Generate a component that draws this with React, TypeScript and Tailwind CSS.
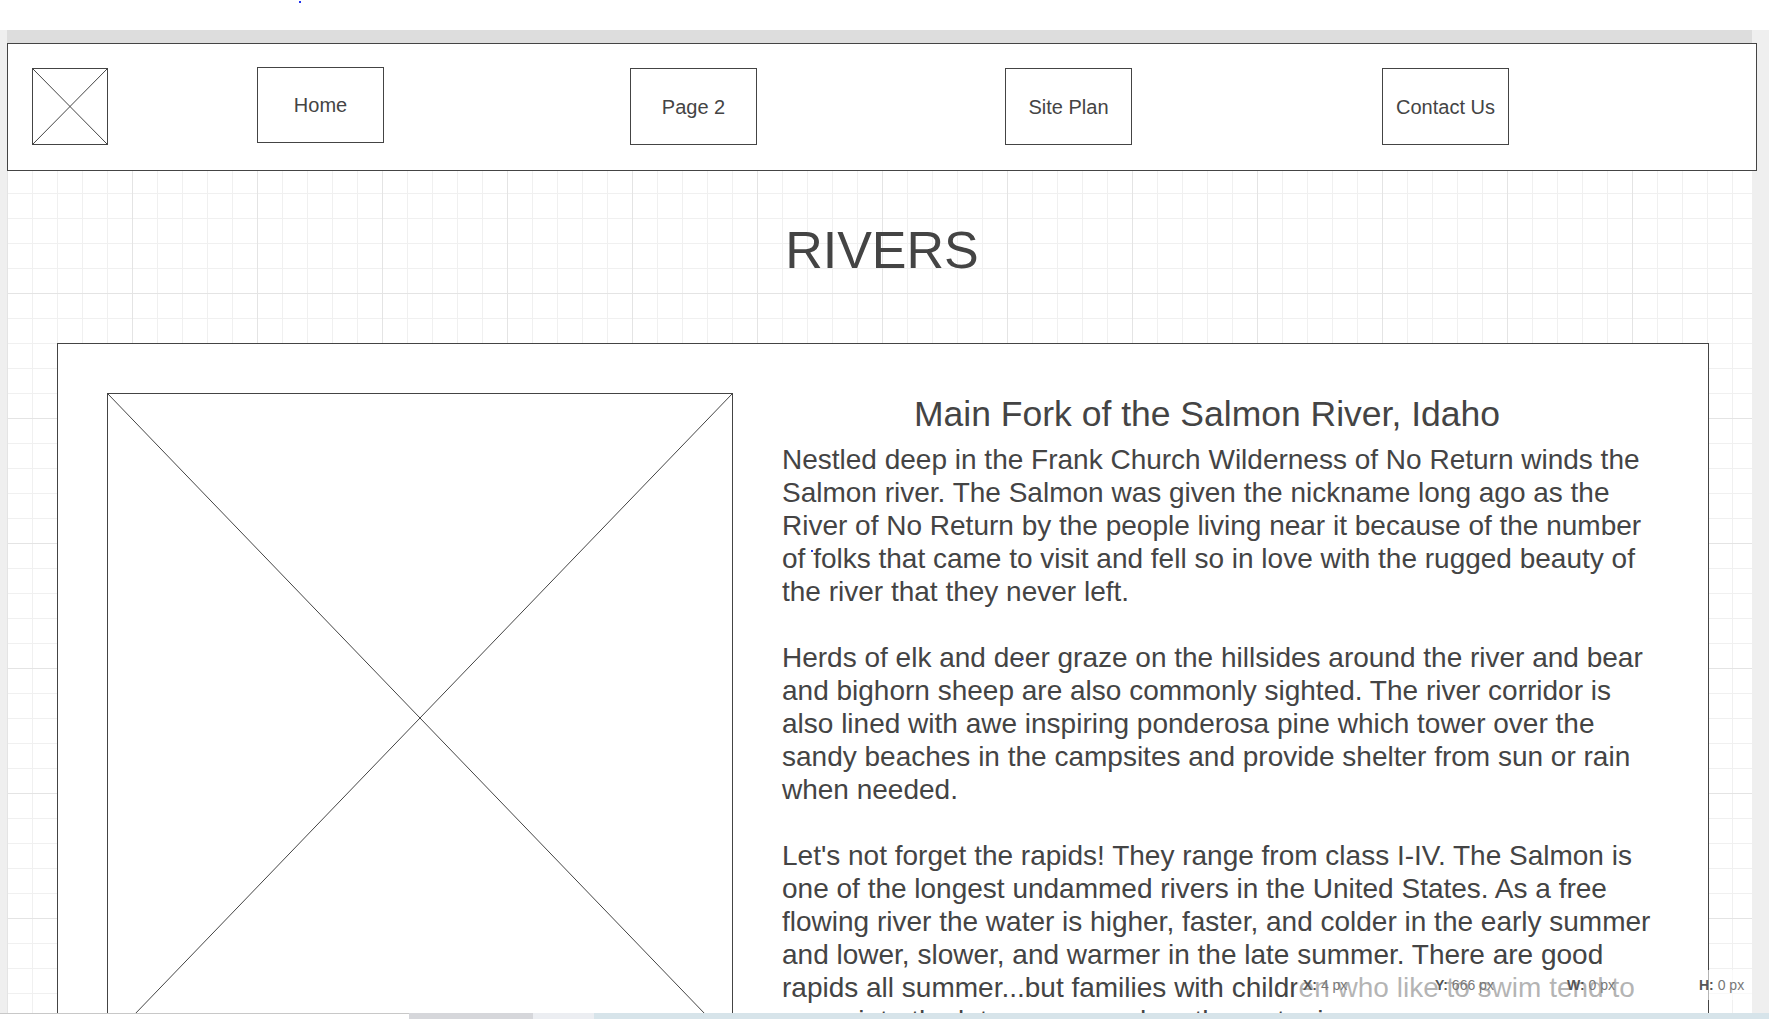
import React from "react";

const navItems = [
  { label: "Home", ml: "ml-[149px]", mt: "mt-[23px]", h: "h-[76px]" },
  { label: "Page 2", ml: "ml-[246px]", mt: "mt-[24px]", h: "h-[77px]" },
  { label: "Site Plan", ml: "ml-[248px]", mt: "mt-[24px]", h: "h-[77px]" },
  { label: "Contact Us", ml: "ml-[250px]", mt: "mt-[24px]", h: "h-[77px]" },
];

const paragraphs = [
  "Nestled deep in the Frank Church Wilderness of No Return winds the Salmon river. The Salmon was given the nickname long ago as the River of No Return by the people living near it because of the number of folks that came to visit and fell so in love with the rugged beauty of the river that they never left.",
  "Herds of elk and deer graze on the hillsides around the river and bear and bighorn sheep are also commonly sighted. The river corridor is also lined with awe inspiring ponderosa pine which tower over the sandy beaches in the campsites and provide shelter from sun or rain when needed.",
  "Let's not forget the rapids! They range from class I-IV. The Salmon is one of the longest undammed rivers in the United States. As a free flowing river the water is higher, faster, and colder in the early summer and lower, slower, and warmer in the late summer. There are good rapids all summer...but families with children who like to swim tend to come into the late summer when the water is warmer.",
];

function Placeholder({ w, h }: { w: number; h: number }) {
  // image placeholder: box with a cross
  return (
    <svg width={w} height={h} className="block shrink-0">
      <rect x="0.5" y="0.5" width={w - 1} height={h - 1} fill="white" stroke="#444" strokeWidth="1" />
      <line x1="1" y1="1" x2={w - 1} y2={h - 1} stroke="#444" strokeWidth="1" />
      <line x1={w - 1} y1="1" x2="1" y2={h - 1} stroke="#444" strokeWidth="1" />
    </svg>
  );
}

function Status() {
  const cells = [
    ["X:", "4 px"],
    ["Y:", "666 px"],
    ["W:", "0 px"],
    ["H:", "0 px"],
  ];
  return (
    <div className="absolute left-[1297px] top-[970px] z-30 flex h-[30px] w-[455px] items-center bg-white/60 pl-[6px] text-[14px]">
      {cells.map(([k, v]) => (
        <div key={k} className="w-[132px] shrink-0 whitespace-nowrap">
          <span className="font-bold text-[#555]">{k}</span>
          <span className="text-[#777]"> {v}</span>
        </div>
      ))}
    </div>
  );
}

export default function App() {
  return (
    <div className="relative h-[1019px] w-[1769px] overflow-hidden bg-white font-['Liberation_Sans',Arial,sans-serif] text-[#444]">
      <div className="h-[30px]" />
      <div className="flex h-[989px]">
        <div className="w-[7px] shrink-0 bg-[#efefef]" />
        <div className="w-[1745px] shrink-0">
          <div className="h-[13px] bg-[#dddddd]" />
          <div className="h-[976px] [background-image:linear-gradient(to_right,#e4e4e4_1px,transparent_1px),linear-gradient(to_bottom,#e4e4e4_1px,transparent_1px),linear-gradient(to_right,#f0f0f0_1px,transparent_1px),linear-gradient(to_bottom,#f0f0f0_1px,transparent_1px)] [background-size:125px_125px,125px_125px,25px_25px,25px_25px]">
            {/* Header */}
            <div className="relative z-10 flex h-[128px] w-[1750px] items-start border border-[#444] bg-white">
              <div className="ml-[24px] mt-[24px]">
                <Placeholder w={76} h={77} />
              </div>
              {navItems.map((item) => (
                <div
                  key={item.label}
                  className={`${item.ml} ${item.mt} ${item.h} flex w-[127px] shrink-0 items-center justify-center border border-[#444] text-[20px]`}
                >
                  {item.label}
                </div>
              ))}
            </div>

            <h1 className="mt-[49px] w-[1750px] text-center text-[52px] leading-[60px]">RIVERS</h1>

            {/* Content */}
            <div className="ml-[50px] mt-[63px] flex h-[760px] w-[1652px] items-start gap-[49px] border border-[#444] bg-white pl-[49px] pt-[49px]">
              <Placeholder w={626} h={650} />
              <div className="flex flex-col">
                <h2 className="w-[850px] text-center text-[35.5px] leading-[42px]">
                  Main Fork of the Salmon River, Idaho
                </h2>
                <div className="mt-[8px] flex w-[878px] flex-col gap-[33px] text-[28px] leading-[33px]">
                  {paragraphs.map((p, i) => (
                    <p key={i}>{p}</p>
                  ))}
                </div>
              </div>
            </div>
          </div>
        </div>
        <div className="w-[17px] shrink-0 bg-[#efefef]" />
      </div>

      {/* stray selection dots */}
      <div className="absolute left-[299px] top-[1px] h-[2px] w-[2px] bg-[#2233ee]" />
      <div className="absolute left-[811px] top-[550px] z-20 h-[2px] w-[2px] bg-[#2233ee]" />
      <div className="absolute left-[1020px] top-[659px] z-20 h-[2px] w-[2px] bg-[#2233ee]" />

      <Status />

      {/* bottom strip */}
      <div className="absolute bottom-0 left-0 z-30 flex h-[6px] w-full">
        <div className="w-[409px] border-t border-[#c8c8c8] bg-white" />
        <div className="w-[124px] bg-[#d6d7db]" />
        <div className="w-[61px] bg-[#eceef2]" />
        <div className="flex-1 bg-[#d7e4ea]" />
      </div>
    </div>
  );
}
